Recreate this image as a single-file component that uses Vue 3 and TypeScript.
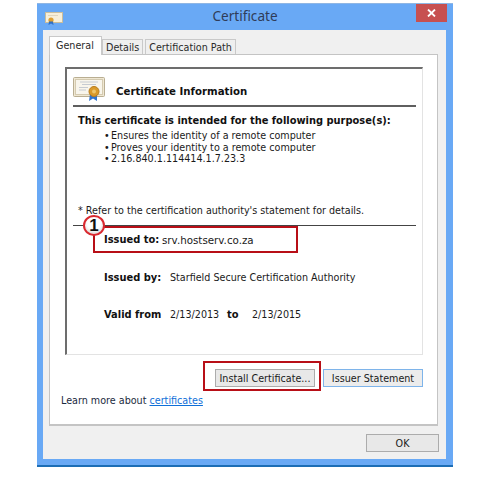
<template>
  <div class="window">
    <div class="titlebar">
      <svg class="title-icon" width="18" height="13" viewBox="0 0 18 13">
        <rect x="0.5" y="0.5" width="17" height="10" fill="#f7efd9" stroke="#c9bd9d" />
        <rect x="3" y="3" width="10" height="1" fill="#e0d6bd" />
        <circle cx="6" cy="8" r="2.6" fill="#e0a030" />
        <path d="M4 9.5 3.5 13 6 11.5 8.5 13 8 9.5Z" fill="#2f6fc4" />
      </svg>
      <span class="title">Certificate</span>
      <button class="close" aria-label="Close">
        <svg width="9" height="8" viewBox="0 0 9 8">
          <path d="M1 .5 8 7.5M8 .5 1 7.5" stroke="#fff" stroke-width="1.8" />
        </svg>
      </button>
    </div>

    <div class="client">
      <div class="tabs">
        <div
          v-for="tab in tabs"
          :key="tab"
          :class="['tab', { 'tab--active': tab === 'General' }]"
        >{{ tab }}</div>
      </div>

      <div class="panel">
        <div class="box">
          <div class="box-head">
            <svg class="cert-icon" width="33" height="24" viewBox="0 0 33 24">
              <rect x="0.5" y="0.5" width="31" height="19" rx="1" fill="#efe7d2" stroke="#b9ae92" />
              <rect x="2.5" y="2.5" width="27" height="15" fill="#f8f5ec" stroke="#d4cab0" />
              <path d="M7 5h18M9 7.5h14M6 10.5h9M6 13h7" stroke="#c6cbd2" />
              <path d="M17 17 16 24 20 21.5 24 24 24 17Z" fill="#2f74d0" />
              <circle cx="21" cy="14.5" r="5" fill="#d99a2b" stroke="#b97c1c" />
              <circle cx="21" cy="14.5" r="2" fill="#efc56a" />
            </svg>
            <span class="box-title">Certificate Information</span>
          </div>
          <div class="rule"></div>

          <p class="purpose">This certificate is intended for the following purpose(s):</p>
          <ul class="purposes">
            <li v-for="p in purposes" :key="p">{{ p }}</li>
          </ul>
          <p class="refer">* Refer to the certification authority's statement for details.</p>
          <div class="rule rule--second"></div>

          <div class="field field--to"><b class="label-to">Issued to:</b><span class="mono">srv.hostserv.co.za</span></div>
          <div class="field field--by"><b class="label">Issued by:</b><span>Starfield Secure Certification Authority</span></div>
          <div class="field field--valid">
            <b class="label">Valid from</b><span class="date">2/13/2013</span><b class="to">to</b><span>2/13/2015</span>
          </div>

          <div class="mark-box mark-box--issued"></div>
          <div class="badge">1</div>
        </div>

        <div class="panel-buttons">
          <div class="install-wrap">
            <button class="btn btn--install">Install Certificate...</button>
          </div>
          <button class="btn btn--issuer">Issuer Statement</button>
        </div>
        <p class="learn">Learn more about <a href="#" @click.prevent>certificates</a></p>
      </div>

      <div class="dialog-foot">
        <button class="btn btn--ok">OK</button>
      </div>
    </div>
  </div>
</template>

<script setup lang="ts">
const tabs: string[] = ['General', 'Details', 'Certification Path']

const purposes: string[] = [
  'Ensures the identity of a remote computer',
  'Proves your identity to a remote computer',
  '2.16.840.1.114414.1.7.23.3',
]
</script>

<style scoped>
.window {
  box-sizing: border-box;
  width: 416px;
  height: 464px;
  margin: 3px 0 0 37px;
  background: #69a9f5;
  border-top: 1px solid #8fb6e4;
  border-bottom: 2px solid #1c6db5;
  font-family: "DejaVu Sans", sans-serif;
  font-size: 9.6px;
  color: #1a1a1a;
}

.titlebar {
  position: relative;
  display: flex;
  justify-content: center;
  height: 26px;
}

.title-icon {
  position: absolute;
  left: 8px;
  top: 8px;
}

.title {
  font-family: "Noto Sans", sans-serif;
  font-size: 13.6px;
  line-height: 24px;
  color: #2f3c58;
}

.close {
  position: absolute;
  top: 0;
  right: 6px;
  width: 31px;
  height: 18px;
  padding: 0;
  border: none;
  background: #c75050;
  display: flex;
  align-items: center;
  justify-content: center;
}

.client {
  box-sizing: border-box;
  width: 403px;
  height: 429px;
  margin-left: 6px;
  padding: 6px 8px 0 6px;
  background: #f0f0f0;
}

.tabs {
  display: flex;
  align-items: flex-end;
  height: 18px;
}

.tab {
  box-sizing: border-box;
  height: 15px;
  padding: 0 3px;
  margin-right: 2px;
  border: 1px solid #c9c9c9;
  border-bottom: none;
  background: #efefef;
  line-height: 15px;
  color: #2a2a2a;
}

.tab--active {
  height: 19px;
  width: 53px;
  margin-right: 0;
  margin-bottom: -1px;
  padding: 1px 0 0 6px;
  background: #fff;
  position: relative;
  z-index: 1;
}

.panel {
  box-sizing: border-box;
  height: 372px;
  padding: 12px 14px 0 15px;
  background: #fff;
  border: 1px solid #c4c4c4;
  border-bottom-width: 2px;
}

.box {
  position: relative;
  box-sizing: border-box;
  height: 288px;
  padding: 0 6px;
  border: 1px solid #e3e3e3;
  border-top: 2px solid #6d6d6d;
  border-left: 2px solid #6d6d6d;
}

.box-head {
  display: flex;
  align-items: center;
  height: 36px;
}

.cert-icon {
  margin: 4px 10px 0 0;
}

.box-title {
  margin-top: 9px;
  font-size: 10.2px;
  font-weight: 700;
  color: #111;
}

.rule {
  height: 2px;
  background: #5f5f5f;
}

.purpose {
  margin: 8px 0 0 5px;
  font-size: 9.9px;
  font-weight: 700;
  color: #111;
  line-height: 12px;
}

.purposes {
  margin: 3px 0 0;
  padding: 0 0 0 31px;
  list-style: none;
  line-height: 11.5px;
}

.purposes li {
  display: flex;
}

.purposes li::before {
  content: "•";
  width: 7px;
}

.refer {
  margin: 39px 0 0 5px;
  line-height: 14px;
}

.rule--second {
  margin: 7px 0 0;
  height: 1px;
  background: #444;
}

.field {
  display: flex;
  align-items: center;
  padding-left: 31px;
  height: 14px;
}

.field b {
  font-size: 9.9px;
  color: #111;
}

.field--to {
  margin-top: 7px;
}

.field--by {
  margin-top: 24px;
}

.field--valid {
  margin-top: 23px;
}

.label-to {
  width: 58px;
}

.mono {
  font-size: 10.3px;
}

.label {
  width: 66px;
}

.date {
  width: 57px;
}

.to {
  width: 25px;
}

.mark-box {
  position: absolute;
  box-sizing: border-box;
  border: 2px solid #b80f17;
}

.mark-box--issued {
  left: 26px;
  top: 157px;
  width: 205px;
  height: 27px;
}

.badge {
  position: absolute;
  left: 16px;
  top: 146px;
  box-sizing: border-box;
  width: 22px;
  height: 21px;
  border: 2px solid #d9292f;
  border-radius: 50%;
  background: #fff;
  box-shadow: inset 0 -2px 3px #ddd;
  text-align: center;
  font-family: "Liberation Sans", sans-serif;
  font-size: 17px;
  font-weight: 700;
  line-height: 18px;
  color: #111;
}

.panel-buttons {
  display: flex;
  align-items: flex-start;
  justify-content: flex-end;
  margin-top: 6px;
}

.install-wrap {
  box-sizing: border-box;
  display: flex;
  width: 118px;
  height: 30px;
  margin-right: 2px;
  padding: 6px 4px 0 10px;
  border: 2px solid #b80f17;
}

.btn {
  box-sizing: border-box;
  height: 18px;
  padding: 0;
  border: 1px solid #acacac;
  background: #e8e8e8;
  font-family: "DejaVu Sans", sans-serif;
  font-size: 9.6px;
  color: #1a1a1a;
}

.btn--install {
  width: 100px;
}

.btn--issuer {
  width: 100px;
  margin-top: 8px;
  border-color: #7eb4ea;
  background: #ececec;
}

.learn {
  margin: 3px 0 0 -4px;
  line-height: 14px;
  color: #1a2a40;
}

.learn a {
  color: #0f6fd8;
}

.dialog-foot {
  display: flex;
  justify-content: flex-end;
  margin-top: 8px;
}

.btn--ok {
  width: 73px;
  margin-right: -1px;
}
</style>

<style>
html, body {
  background: #fff;
}
</style>
